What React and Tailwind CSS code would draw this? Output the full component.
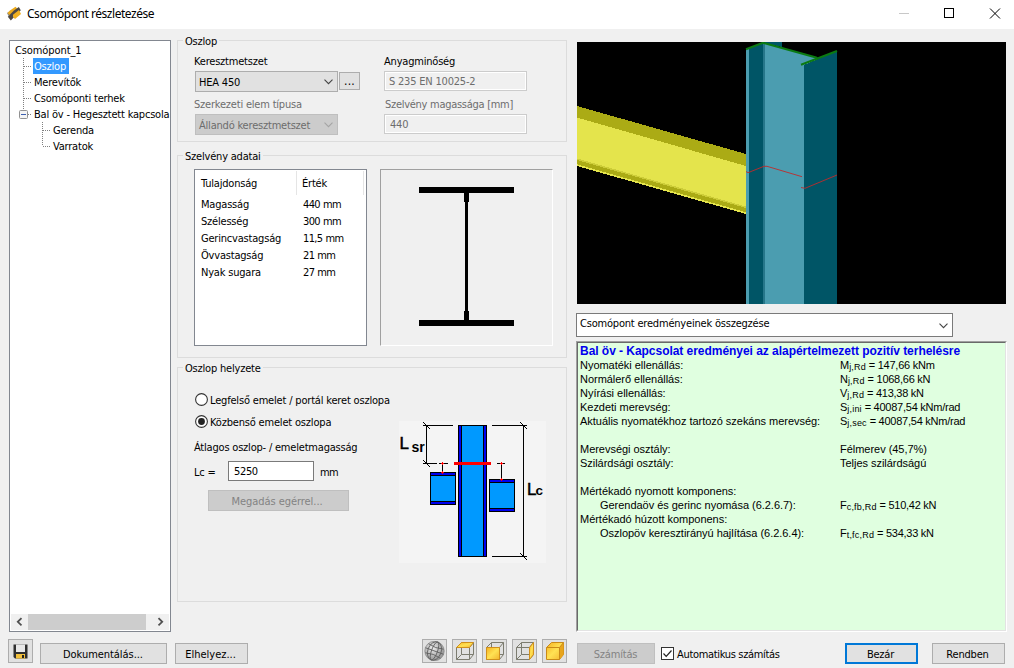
const BTN = "flex items-center justify-center border border-[#adadad] bg-[#e1e1e1] whitespace-nowrap";
const BTN_OFF = "flex items-center justify-center border border-[#bfbfbf] bg-[#cccccc] text-[#838383] whitespace-nowrap";

function Chevron({ color }) {
  return (
    <svg width="9" height="6" viewBox="0 0 9 6" fill="none" stroke={color} strokeWidth="1.1">
      <path d="M0.5 0.7 L4.5 4.7 L8.5 0.7" />
    </svg>
  );
}

function Logo() {
  return (
    <svg width="16" height="16" viewBox="0 0 16 16">
      <path d="M1 7 L5.5 4 L7.5 6.500 L2.500 10 Z" fill="#8a8a8a" />
      <path d="M4 4.500 L9.500 0.800 L11.500 3 L3.500 9 L1.500 7 Z" fill="#edaa1a" />
      <path d="M8 4.500 L12.800 1 L14.800 4.200 L4.800 14.500 L1.800 10.800 Z" fill="#4c4844" />
      <path d="M7 8.800 L13 4 L15 8 L9 13 L7 11 Z" fill="#f0b020" />
    </svg>
  );
}

function TitleBar() {
  return (
    <header className="flex h-[29px] shrink-0 items-center bg-white pl-[6px]">
      <div className="pb-[2px]"><Logo /></div>
      <span className="ml-[5px] pb-[2px] font-['Noto_Sans','Open_Sans',sans-serif] text-[12px] leading-[16px] tracking-[-0.46px] whitespace-nowrap">Csomópont részletezése</span>
      <div className="ml-auto flex h-[29px] items-center pr-[13px] pb-px">
        <svg width="102" height="12" viewBox="0 0 102 12" fill="none">
          <path d="M0 5.5 H10" stroke="#c8c8c8" />
          <rect x="45.5" y="0.5" width="9" height="9" stroke="#000" />
          <path d="M91 0.5 L101 10.5 M101 0.5 L91 10.5" stroke="#000" />
        </svg>
      </div>
    </header>
  );
}

function Connector({ last, box }) {
  return (
    <svg width="14" height="16" viewBox="0 0 14 16" className="shrink-0" fill="none">
      <path d={last ? "M4.5 0 V8" : "M4.5 0 V16"} stroke="#808080" strokeDasharray="1 1" />
      <path d="M5 8.5 H13" stroke="#808080" strokeDasharray="1 1" />
      {box && (
        <g>
          <rect x="0.5" y="4.5" width="8" height="8" rx="1" fill="#f4f4f4" stroke="#919191" />
          <path d="M2 8.5 H7" stroke="#3c5fb0" />
        </g>
      )}
    </svg>
  );
}

function Node({ label, selected, last, box, child }) {
  return (
    <li className={child ? "flex h-4 items-center pl-[27px]" : "flex h-4 items-center pl-[8px]"}>
      <Connector last={last} box={box} />
      <span className={selected ? "h-4 w-[36px] bg-[#3399ff] pl-px text-white" : "h-4 pl-px"}>{label}</span>
    </li>
  );
}

function Tree() {
  return (
    <nav className="flex h-[592px] w-[162px] flex-col border border-[#828790] bg-white p-px">
      <ul className="flex-1 leading-[17px] whitespace-nowrap">
        <li className="h-4 pl-[4px] tracking-[-0.1px]">Csomópont_1</li>
        <Node label="Oszlop" selected />
        <Node label="Merevítők" />
        <Node label="Csomóponti terhek" />
        <Node label="Bal öv - Hegesztett kapcsola" last box />
        <Node label="Gerenda" child />
        <Node label="Varratok" child last />
      </ul>
      <div className="flex h-4 items-center bg-[#f0f0f0]">
        <svg width="17" height="16" viewBox="0 0 17 16" fill="none" stroke="#505050" strokeWidth="1.8">
          <path d="M10.5 4.2 L6.8 7.8 L10.5 11.4" />
        </svg>
        <div className="h-4 w-[118px] bg-[#cdcdcd]" />
        <svg width="23" height="16" viewBox="0 0 23 16" fill="none" stroke="#505050" strokeWidth="1.8">
          <path d="M12.5 4.2 L16.2 7.8 L12.5 11.4" />
        </svg>
      </div>
    </nav>
  );
}

function Group({ title, className, children }) {
  return (
    <fieldset className={"min-w-0 border border-[#dcdcdc] " + className}>
      <legend className="ml-[5px] h-[11px] px-[2px] leading-[13px] whitespace-nowrap">{title}</legend>
      {children}
    </fieldset>
  );
}

function ColumnGroup() {
  return (
    <Group title="Oszlop" className="h-[107px]">
      <div className="flex pt-[8px] pl-[16px] leading-[16px] whitespace-nowrap">
        <div className="w-[189px]">
          <div className="h-[17px]">Keresztmetszet</div>
          <div className="flex items-start gap-px pl-px">
            <div className="flex h-[21px] w-[143px] items-center justify-between border border-[#adadad] bg-[#e1e1e1] pr-1 pl-[3px]">
              <span className="pt-[2px]">HEA 450</span>
              <Chevron color="#444" />
            </div>
            <button className={BTN + " mt-px h-[18px] w-[21px] pb-px text-[12px] tracking-[0.3px]"}>...</button>
          </div>
          <div className="h-[22px] pt-[4px] leading-[18px] text-[#6d6d6d]">Szerkezeti elem típusa</div>
          <div className="ml-px flex h-[21px] w-[143px] items-center justify-between border border-[#bfbfbf] bg-[#cccccc] pr-1 pl-[3px] text-[#6d6d6d]">
            <span className="pt-[2px]">Állandó keresztmetszet</span>
            <Chevron color="#a5a5a5" />
          </div>
        </div>
        <div>
          <div className="h-[17px] pl-px">Anyagminőség</div>
          <div className="ml-px flex h-[20px] w-[143px] items-center border border-[#cccccc] pt-px pl-[4px] text-[#6d6d6d] shadow-[inset_0_0_0_1px_#fff]">S 235 EN 10025-2</div>
          <div className="h-[23px] pt-[5px] pl-[2px] leading-[18px] tracking-[-0.28px] text-[#6d6d6d]">Szelvény magassága [mm]</div>
          <div className="ml-px flex h-[20px] w-[143px] items-center border border-[#cccccc] pt-px pl-[5px] text-[#6d6d6d] shadow-[inset_0_0_0_1px_#fff]">440</div>
        </div>
      </div>
    </Group>
  );
}

const PROPS = [
  ["Magasság", "440 mm"],
  ["Szélesség", "300 mm"],
  ["Gerincvastagság", "11,5 mm"],
  ["Övvastagság", "21 mm"],
  ["Nyak sugara", "27 mm"],
];

function SectionGroup() {
  return (
    <Group title="Szelvény adatai" className="mt-[8px] h-[208px]">
      <div className="flex gap-[13px] pt-[8px] pl-[16px] whitespace-nowrap">
        <div className="h-[177px] w-[173px] border border-[#828790] bg-white p-px">
          <div className="flex h-[24px]">
            <div className="w-[101px] border-r border-[#e5e5e5] pt-[5px] pl-[5px] leading-[16px]">Tulajdonság</div>
            <div className="w-[67px] border-r border-[#e5e5e5] pt-[5px] pl-[5px] leading-[16px]">Érték</div>
          </div>
          {PROPS.map(([k, v]) => (
            <div key={k} className="flex h-[17px] leading-[19px]">
              <div className="w-[102px] pl-[5px]">{k}</div>
              <div className="pl-[5px] tracking-[-0.65px] [word-spacing:0.5px]">{v}</div>
            </div>
          ))}
        </div>
        <div className="h-[177px] w-[173px] border border-t-[#a0a0a0] border-r-white border-b-white border-l-[#a0a0a0]">
          <svg width="171" height="175" viewBox="0 0 171 175" shapeRendering="crispEdges">
            <path d="M38 17 H133 V23 H88 V32 H87 V141 H88 V150 H133 V156 H38 V150 H83 V141 H84 V32 H83 V23 H38 Z" />
          </svg>
        </div>
      </div>
    </Group>
  );
}

function Radio({ label, on }) {
  return (
    <label className="flex h-[22px] items-center gap-[2px] leading-[16px]">
      <svg width="13" height="13" viewBox="0 0 13 13" className="mb-px">
        <circle cx="6.5" cy="6.5" r="5.9" fill="#fff" stroke="#333" strokeWidth="1.1" />
        {on && <circle cx="6.5" cy="6.5" r="3.4" fill="#222" />}
      </svg>
      <span className="pt-[2px] tracking-[-0.18px]">{label}</span>
    </label>
  );
}

function Cross({ x, y }) {
  return <path d={`M${x - 1} ${y + 0.5} h3 M${x + 0.5} ${y - 1} v3`} stroke="#f00" />;
}

function StoreyDiagram() {
  return (
    <svg width="147" height="142" viewBox="0 0 147 142" className="bg-[#f4f4f4]" shapeRendering="crispEdges" fill="none">
      <rect x="59.5" y="4.5" width="28" height="131" fill="#0000f0" stroke="#000" />
      <rect x="62.5" y="4.5" width="22" height="131" fill="#0099ff" stroke="#000" />
      <rect x="31.5" y="51.5" width="25" height="32" fill="#0000f0" stroke="#000" />
      <rect x="31.5" y="54.5" width="25" height="26" fill="#0099ff" stroke="#000" />
      <rect x="90.5" y="58.5" width="25" height="32" fill="#0000f0" stroke="#000" />
      <rect x="90.5" y="61.5" width="25" height="26" fill="#0099ff" stroke="#000" />
      <rect x="55" y="41" width="37" height="3" fill="#f00" />
      <g stroke="#000">
        <path d="M27.5 4 V43 M24 4.5 H54 M24 42.5 H38" />
        <path d="M124.5 4 V136 M93 4.5 H128 M93 135.5 H128" />
        <path d="M40 42.5 H49 M43.5 42 V51 M98 42.5 H106 M102.5 42 V58" />
        <path d="M24 1 L31 8 M24 39 L31 46 M121 1 L128 8 M121 132 L128 139" />
      </g>
      <Cross x={43} y={42} />
      <Cross x={43} y={51} />
      <Cross x={102} y={42} />
      <Cross x={102} y={58} />
      <g fill="#000" className="font-['Liberation_Sans',Arial,sans-serif] tracking-normal">
        <text x="0.5" y="28" fontSize="17" stroke="#000" strokeWidth="0.5">L</text>
        <text x="12.500" y="31" fontSize="14" fontWeight="bold">sr</text>
        <text x="128" y="74" fontSize="17" stroke="#000" strokeWidth="0.5">L</text>
        <text x="136.500" y="74" fontSize="13.500" fontWeight="bold">c</text>
      </g>
    </svg>
  );
}

function PositionGroup() {
  return (
    <Group title="Oszlop helyzete" className="mt-[4px] h-[240px]">
      <div className="flex pl-[16px] whitespace-nowrap">
        <div className="w-[205px] pt-[16px]">
          <div className="pl-px">
            <Radio label="Legfelső emelet / portál keret oszlopa" />
            <Radio label="Közbenső emelet oszlopa" on />
          </div>
          <div className="mt-[6px] h-[16px] leading-[18px]">Átlagos oszlop- / emeletmagasság</div>
          <div className="mt-[6px] flex h-[20px] items-center">
            <span className="w-[34px] pt-[4px]">Lc =</span>
            <div className="flex h-[20px] w-[86px] items-center border border-[#7a7a7a] bg-white pt-px pl-[5px] tracking-[-0.35px]">5250</div>
            <span className="pt-[4px] pl-[6px] tracking-[-0.6px]">mm</span>
          </div>
          <button className={BTN_OFF + " mt-[9px] ml-[14px] h-[21px] w-[141px] pt-[2px] pr-[3px] tracking-[-0.05px]"}>Megadás egérrel...</button>
        </div>
        <div className="pt-[48px]">
          <StoreyDiagram />
        </div>
      </div>
    </Group>
  );
}

function Scene() {
  return (
    <svg width="429" height="262" viewBox="0 0 429 262" className="ml-px bg-black">
      <g shapeRendering="crispEdges">
        <path d="M0 64 L169 112 V125 L0 76 Z" fill="#abab15" />
        <path d="M0 75.5 L169 124 V166 L0 118 Z" fill="#e4e44c" />
        <path d="M0 116.500 L169 164.5 V166 L0 118 Z" fill="#cdcd38" />
        <path d="M0 118 L169 166 V171 L0 123 Z" fill="#abab15" />
        <path d="M0 122.300 L169 170.300 V172 L0 124 Z" fill="#e4e44c" />
        <path d="M188 0 H205 V5 L188 1 Z" fill="#005566" />
        <path d="M169 7 H172 V262 H169 Z" fill="#4b9db0" />
        <path d="M172 6 L187 1 V262 H172 Z" fill="#005566" />
        <path d="M186 1 H189 V262 H186 Z" fill="#267689" />
        <path d="M188 1 L239 15 L241 18 L227 23 V262 H188 Z" fill="#4b9db0" />
        <path d="M227 23 L260 9 V262 H227 Z" fill="#005566" />
      </g>
      <g fill="none" stroke="#0b7a12" strokeWidth="2">
        <path d="M169 7.200 L186 0.700 L239 15.500 L241 17" />
        <path d="M224 22.700 L260 9" />
      </g>
      <g fill="none" stroke="#c02a2a" strokeWidth="0.9">
        <path d="M169 129.500 L171 130.700 L187 124.300 H190 L225 134.700" />
        <path d="M224 145.500 L228 146.300 L260 133" />
      </g>
    </svg>
  );
}

function Row({ label, sym, sub, value, indent }) {
  return (
    <div className="flex h-[14px]">
      <div className={indent ? "w-[260px] pl-[20px]" : "w-[260px]"}>{label}</div>
      <div>
        {sym}
        {sub && <span className="relative top-px text-[9px] leading-none tracking-[0.2px]">{sub}</span>}
        <span className={sub ? "tracking-[-0.25px]" : ""}>{value}</span>
      </div>
    </div>
  );
}

function Results() {
  return (
    <div className="mt-[4px] h-[291px] w-[431px] border border-t-[#a0a0a0] border-r-white border-b-white border-l-[#a0a0a0]">
      <div className="h-full border border-t-[#696969] border-r-[#e3e3e3] border-b-[#e3e3e3] border-l-[#696969] bg-[#e0ffe0] pl-[2px] font-['Liberation_Sans',Arial,sans-serif] text-[11px] leading-[14px] tracking-[-0.03px] whitespace-nowrap">
        <div className="h-[15px] text-[12px] leading-[16px] font-bold tracking-[-0.04px] text-[#0000ee]">Bal öv - Kapcsolat eredményei az alapértelmezett pozitív terhelésre</div>
        <Row label="Nyomatéki ellenállás:" sym="M" sub="j,Rd" value=" = 147,66 kNm" />
        <Row label="Normálerő ellenállás:" sym="N" sub="j,Rd" value=" = 1068,66 kN" />
        <Row label="Nyírási ellenállás:" sym="V" sub="j,Rd" value=" = 413,38 kN" />
        <Row label="Kezdeti merevség:" sym="S" sub="j,ini" value=" = 40087,54 kNm/rad" />
        <Row label="Aktuális nyomatékhoz tartozó szekáns merevség:" sym="S" sub="j,sec" value=" = 40087,54 kNm/rad" />
        <Row />
        <Row label="Merevségi osztály:" value="Félmerev (45,7%)" />
        <Row label="Szilárdsági osztály:" value="Teljes szilárdságú" />
        <Row />
        <Row label="Mértékadó nyomott komponens:" />
        <Row indent label="Gerendaöv és gerinc nyomása (6.2.6.7):" sym="F" sub="c,fb,Rd" value=" = 510,42 kN" />
        <Row label="Mértékadó húzott komponens:" />
        <Row indent label="Oszlopöv keresztirányú hajlítása (6.2.6.4):" sym="F" sub="t,fc,Rd" value=" = 534,33 kN" />
      </div>
    </div>
  );
}

function ToolButton({ children }) {
  return (
    <button className="flex h-[24px] w-[25px] items-center justify-center border border-[#adadad] bg-[#e1e1e1]">
      <svg width="21" height="20" viewBox="0 0 21 20" fill="none">
        <defs>
          <linearGradient id="gold" x1="0" y1="0" x2="1" y2="1">
            <stop offset="0" stopColor="#f5b020" />
            <stop offset="0.5" stopColor="#ffe254" />
            <stop offset="1" stopColor="#f2b42c" />
          </linearGradient>
          <radialGradient id="ball" cx="0.4" cy="0.35" r="0.7">
            <stop offset="0" stopColor="#ececec" />
            <stop offset="1" stopColor="#8c8c8c" />
          </radialGradient>
        </defs>
        {children}
      </svg>
    </button>
  );
}

const FRONT = "M2.500 6.500 H15.500 V18.500 H2.500 Z";
const BACK = "M7.500 1.500 H19.500 V13.500 H7.500 Z";
const EDGES = "M2.500 6.500 L7.500 1.500 M15.500 6.500 L19.500 1.500 M15.500 18.500 L19.500 13.500 M2.500 18.500 L7.500 13.500";

function Wire() {
  return <path d={FRONT + BACK + EDGES} stroke="#7c7c70" />;
}

function Footer() {
  return (
    <footer className="flex h-[36px] items-start pl-[8px] whitespace-nowrap">
      <button className="mt-[7px] flex h-[24px] w-[25px] items-center justify-center border border-[#adadad] bg-[#e1e1e1]">
        <svg width="15" height="15" viewBox="0 0 15 15">
          <path d="M0.500 0.500 H14.500 V14.500 H2 L0.500 13 Z" fill="#2e2e2e" />
          <rect x="3" y="0.500" width="9" height="7.500" fill="#e8e8e8" />
          <rect x="3" y="10" width="9" height="4.500" fill="#f3c13c" />
          <rect x="9" y="11" width="2" height="3" fill="#222" />
        </svg>
      </button>
      <button className={BTN + " mt-[11px] ml-[7px] h-[21px] w-[127px] pt-[2px] pr-px tracking-[-0.05px]"}>Dokumentálás...</button>
      <button className={BTN + " mt-[11px] ml-[8px] h-[21px] w-[73px] pt-[2px] pr-[2px] tracking-[0px]"}>Elhelyez...</button>
      <div className="mt-[7px] ml-[174px] flex gap-[5px]">
        <ToolButton>
          <circle cx="10.500" cy="10" r="9.700" fill="url(#ball)" stroke="#8a8a8a" strokeWidth="0.8" />
          <g stroke="#5c5c5c" strokeWidth="0.8" transform="rotate(20 10.500 10)">
            <ellipse cx="10.500" cy="10" rx="3" ry="9.500" />
            <ellipse cx="10.500" cy="10" rx="6.700" ry="9.500" />
            <path d="M1 10 H20 M2.500 5.200 Q10.500 7.500 18.500 5.200 M2.500 14.800 Q10.500 12.500 18.500 14.800" />
          </g>
        </ToolButton>
        <ToolButton>
          <Wire />
          <path d="M2.500 6.500 L7.500 1.500 H19.500 L15.500 6.500 Z" fill="url(#gold)" stroke="#d0901c" />
        </ToolButton>
        <ToolButton>
          <Wire />
          <path d={FRONT} fill="url(#gold)" stroke="#d0901c" />
        </ToolButton>
        <ToolButton>
          <Wire />
          <path d="M15.500 6.500 L19.500 1.500 V13.500 L15.500 18.500 Z" fill="url(#gold)" stroke="#d0901c" />
        </ToolButton>
        <ToolButton>
          <path d="M2.500 6.500 L7.500 1.500 H19.500 V13.500 L15.500 18.500 H2.500 Z" fill="url(#gold)" stroke="#c98a18" />
          <path d="M15.500 6.500 L19.500 1.500 V13.500 L15.500 18.500 Z" fill="#e8a51c" />
          <path d="M2.500 6.500 H15.500 V18.500 M15.500 6.500 L19.500 1.500" stroke="#c98a18" />
        </ToolButton>
      </div>
      <button className={BTN_OFF + " mt-[11px] ml-[10px] h-[21px] w-[78px] pt-[2px] pr-px"}>Számítás</button>
      <label className="mt-[11px] ml-[6px] flex h-[21px] w-[184px] items-center gap-[3px]">
        <svg width="13" height="13" viewBox="0 0 13 13" fill="none" stroke="#222">
          <rect x="0.500" y="0.500" width="12" height="12" fill="#fff" stroke="#333" />
          <path d="M2.500 6.500 L5.200 9.300 L10.500 3.500" strokeWidth="1.200" />
        </svg>
        <span className="pt-[2px] tracking-[-0.33px]">Automatikus számítás</span>
      </label>
      <button className="mt-[11px] flex h-[21px] w-[73px] items-center justify-center border-2 border-[#0078d7] bg-[#e1e1e1] pt-[2px] pr-[2px]">Bezár</button>
      <button className={BTN + " mt-[11px] ml-[14px] h-[21px] w-[73px] pt-[2px] pr-[2px]"}>Rendben</button>
    </footer>
  );
}

export default function App() {
  return (
    <div className="flex h-[668px] w-[1014px] flex-col overflow-hidden bg-[#f0f0f0] font-['DejaVu_Sans_Condensed','DejaVu_Sans',sans-serif] text-[11px] leading-[16px] tracking-[-0.2px] text-black">
      <TitleBar />
      <main className="flex h-[603px] items-start pl-[9px]">
        <div className="pt-[11px]">
          <Tree />
        </div>
        <div className="ml-[6px] w-[390px] pt-[6px]">
          <ColumnGroup />
          <SectionGroup />
          <PositionGroup />
        </div>
        <div className="ml-[9px] flex w-[431px] flex-col pt-[13px]">
          <Scene />
          <div className="mt-[9px] flex h-[24px] w-[377px] items-center justify-between border border-[#7a7a7a] bg-white pr-1 pb-[3px] pl-[3px] whitespace-nowrap">
            Csomópont eredményeinek összegzése
            <span className="pt-[5px]"><Chevron color="#444" /></span>
          </div>
          <Results />
        </div>
      </main>
      <Footer />
    </div>
  );
}
